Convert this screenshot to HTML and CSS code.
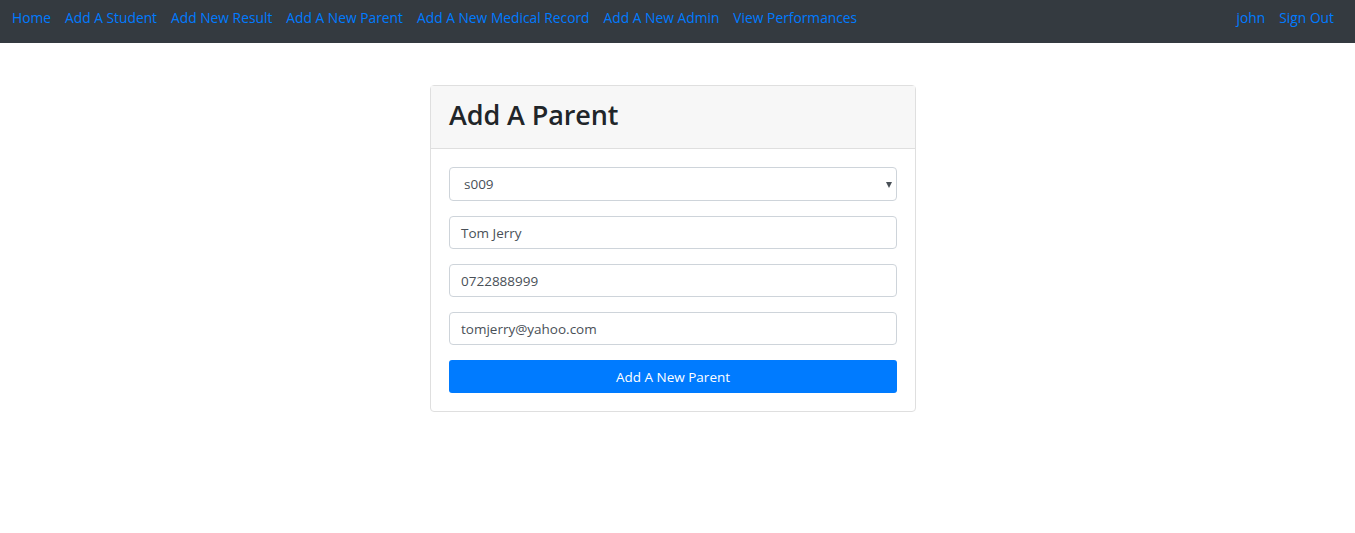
FILE: index.html
```html
<!DOCTYPE html>
<html>
<head>
<meta charset="utf-8">
<link rel="stylesheet" href="styles.css">
</head>
<body>
<nav class="navbar">
  <ul class="nav-left">
    <li><a href="#">Home</a></li>
    <li><a href="#">Add A Student</a></li>
    <li><a href="#">Add New Result</a></li>
    <li><a href="#">Add A New Parent</a></li>
    <li><a href="#">Add A New Medical Record</a></li>
    <li><a href="#">Add A New Admin</a></li>
    <li><a href="#">View Performances</a></li>
  </ul>
  <ul class="nav-right">
    <li><a href="#">john</a></li>
    <li><a href="#">Sign Out</a></li>
  </ul>
</nav>
<main class="main">
  <div class="card">
    <div class="card-header"><h1>Add A Parent</h1></div>
    <form class="card-body">
      <div class="select-wrap">
        <div class="field select">s009</div>
        <span class="caret"></span>
      </div>
      <div class="field">Tom Jerry</div>
      <div class="field">0722888999</div>
      <div class="field">tomjerry@yahoo.com</div>
      <button type="button" class="btn">Add A New Parent</button>
    </form>
  </div>
</main>
</body>
</html>
```
FILE: styles.css
```css
* { box-sizing: border-box; }
html, body { margin: 0; padding: 0; }
body {
  font-family: "Open Sans", "Noto Sans", sans-serif;
  font-size: 14px;
  color: #212529;
  background: #fff;
}
.navbar {
  height: 43px;
  background: #343a40;
  display: flex;
  justify-content: space-between;
  align-items: center;
  padding: 0 14px 0 5px;
}
.navbar ul {
  list-style: none;
  margin: 0;
  padding: 0;
  display: flex;
}
.navbar a {
  display: block;
  color: #007bff;
  text-decoration: none;
  padding: 0 7px;
  font-size: 13.8px;
  line-height: 20px;
  margin-top: -7px;
}
.main {
  display: flex;
  justify-content: center;
  padding-top: 42px;
}
.card {
  width: 486px;
  border: 1px solid #dfdfdf;
  border-radius: 4px;
  margin-right: 9px;
}
.card-header {
  background: #f7f7f7;
  border-bottom: 1px solid #dfdfdf;
  height: 63px;
  padding: 0 18px 5px;
  display: flex;
  align-items: center;
}
.card-header h1 {
  margin: 0;
  font-size: 27px;
  font-weight: 600;
  color: #212529;
  letter-spacing: -0.1px;
}
.card-body {
  padding: 18px 18px 18px;
  display: flex;
  flex-direction: column;
}
.field {
  height: 33px;
  border: 1px solid #ced4da;
  border-radius: 4px;
  padding: 0 11px;
  display: flex;
  align-items: center;
  color: #495057;
  font-size: 13.5px;
  margin-bottom: 15px;
}
.select-wrap {
  position: relative;
  margin-bottom: 15px;
}
.field.select {
  height: 34px;
  margin-bottom: 0;
  padding-left: 14px;
}
.caret {
  position: absolute;
  right: 5px;
  top: 15px;
  width: 0;
  height: 0;
  border-left: 3.5px solid transparent;
  border-right: 3.5px solid transparent;
  border-top: 6px solid #495057;
}
.btn {
  height: 33px;
  border: none;
  border-radius: 3px;
  background: #007bff;
  color: #fff;
  font-family: inherit;
  font-size: 13.5px;
  margin-top: 0;
}
```
